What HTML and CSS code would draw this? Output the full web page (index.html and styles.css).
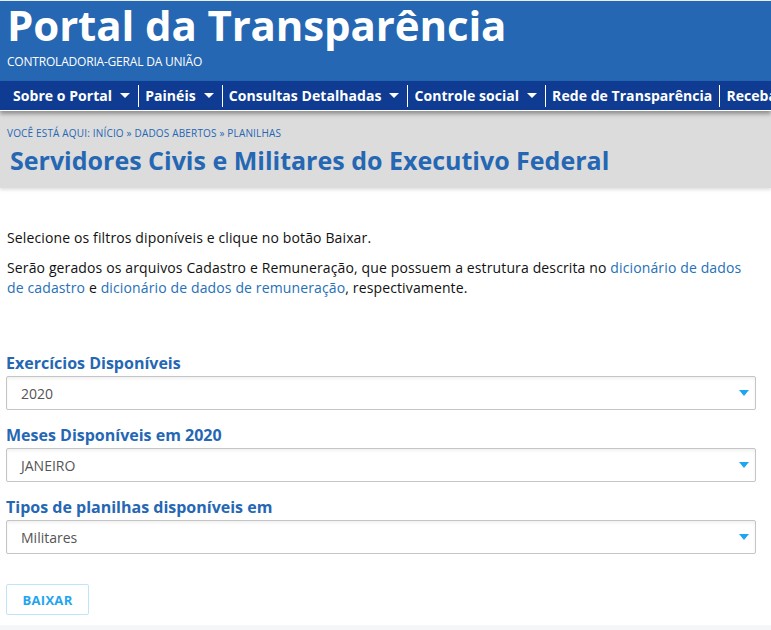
FILE: index.html
```html
<!DOCTYPE html>
<html lang="pt-BR">
<head>
<meta charset="utf-8">
<title>Portal da Transparência</title>
<link rel="stylesheet" href="styles.css">
</head>
<body>
<header class="top">
  <div class="brand">
    <h1 class="brand-title">Portal da Transparência</h1>
    <div class="brand-sub">CONTROLADORIA-GERAL DA UNIÃO</div>
  </div>
  <nav class="nav">
    <div class="nav-item">Sobre o Portal <span class="caret"></span></div>
    <div class="nav-item">Painéis <span class="caret"></span></div>
    <div class="nav-item">Consultas Detalhadas <span class="caret"></span></div>
    <div class="nav-item">Controle social <span class="caret"></span></div>
    <div class="nav-item">Rede de Transparência</div>
    <div class="nav-item">Receba notícias</div>
  </nav>
</header>
<section class="crumbs">
  <div class="crumb-line">VOCÊ ESTÁ AQUI: <a>INÍCIO</a> » <a>DADOS ABERTOS</a> » <a>PLANILHAS</a></div>
  <h2 class="page-title">Servidores Civis e Militares do Executivo Federal</h2>
</section>
<main class="content">
  <p class="para">Selecione os filtros diponíveis e clique no botão Baixar.</p>
  <p class="para">Serão gerados os arquivos Cadastro e Remuneração, que possuem a estrutura descrita no <a class="link">dicionário de dados de cadastro</a> e <a class="link">dicionário de dados de remuneração</a>, respectivamente.</p>
  <div class="form">
    <label class="field-label">Exercícios Disponíveis</label>
    <div class="select"><span>2020</span><span class="arrow"></span></div>
    <label class="field-label">Meses Disponíveis em 2020</label>
    <div class="select"><span>JANEIRO</span><span class="arrow"></span></div>
    <label class="field-label">Tipos de planilhas disponíveis em</label>
    <div class="select"><span>Militares</span><span class="arrow"></span></div>
    <button class="btn">BAIXAR</button>
  </div>
</main>
<div class="footer-strip"></div>
</body>
</html>
```
FILE: styles.css
```css
* { box-sizing: border-box; }
html, body { margin: 0; padding: 0; }
body {
  font-family: "Open Sans", "DejaVu Sans", sans-serif;
  color: #222;
  background: #fff;
  width: 771px;
  overflow: hidden;
}
.top { background: #2567b3; }
.brand { padding: 1px 7px 0; height: 81px; border-top: 1px solid #e9eef6; }
.brand-title {
  margin: 0;
  font-size: 42px;
  font-weight: 700;
  color: #fff;
  line-height: 46px;
  letter-spacing: -0.12px;
  white-space: nowrap;
}
.brand-sub {
  color: #fff;
  font-size: 12px;
  line-height: 16px;
  margin-top: 6px;
  letter-spacing: -0.2px;
}
.nav {
  background: #0f3c92;
  height: 30px;
  display: flex;
  align-items: center;
  white-space: nowrap;
  overflow: hidden;
  padding-left: 6px;
  border-bottom: 1px solid #fff;
  box-shadow: 0 3px 4px rgba(0,0,0,0.35);
  position: relative;
  z-index: 2;
}
.nav-item {
  color: #fff;
  font-weight: 700;
  font-size: 14px;
  padding: 0 7px 0 6px;
  display: flex;
  align-items: center;
  gap: 8px;
  height: 22px;
  border-left: 1px solid #fff;
  flex-shrink: 0;
  letter-spacing: 0.05px;
}
.nav-item:first-child { border-left: none; padding-left: 7px; }
.caret {
  width: 0; height: 0;
  border-left: 5px solid transparent;
  border-right: 5px solid transparent;
  border-top: 5px solid #fff;
  margin-right: 1px;
}
.crumbs {
  background: #dcdcdc;
  height: 77px;
  padding: 15px 7px 0;
  box-shadow: 0 2px 3px rgba(0,0,0,0.12);
}
.crumb-line {
  font-size: 10px;
  color: #2567b3;
  line-height: 14px;
  letter-spacing: 0.17px;
}
.crumb-line a { color: #2567b3; }
.page-title {
  margin: 5px 0 0 3px;
  font-size: 25px;
  font-weight: 700;
  color: #2567b3;
  line-height: 30px;
}
.content { padding: 40px 7px 0; }
.para {
  margin: 0 0 10px;
  max-width: 750px;
  font-size: 14px;
  line-height: 20px;
  color: #111;
  letter-spacing: 0.13px;
}
.link { color: #2670b8; }
.form { margin-top: 54px; display: flex; flex-direction: column; }
.field-label {
  color: #2567b3;
  font-weight: 700;
  font-size: 16px;
  line-height: 22px;
  margin-bottom: 2px;
  margin-left: -1px;
}
.select {
  width: 750px;
  margin-left: -1px;
  height: 34px;
  border: 1px solid #c5c5c5;
  border-radius: 2px;
  box-shadow: inset 0 2px 3px rgba(0,0,0,0.06);
  display: flex;
  align-items: center;
  justify-content: space-between;
  padding: 0 6px 0 14px;
  font-size: 14px;
  color: #555;
  margin-bottom: 14px;
}
.arrow {
  width: 0; height: 0;
  border-left: 5px solid transparent;
  border-right: 5px solid transparent;
  border-top: 6px solid #1fa5f0;
}
.btn {
  align-self: flex-start;
  margin-top: 16px;
  margin-left: -1px;
  width: 83px;
  height: 31px;
  background: #fff;
  border: 1px solid #bfe6f8;
  border-radius: 2px;
  color: #1fa5f0;
  font-family: "Open Sans", sans-serif;
  font-weight: 700;
  font-size: 13px;
  letter-spacing: 0.3px;
}
.footer-strip {
  margin-top: 10px;
  height: 20px;
  background: #f5f6f8;
}
```
